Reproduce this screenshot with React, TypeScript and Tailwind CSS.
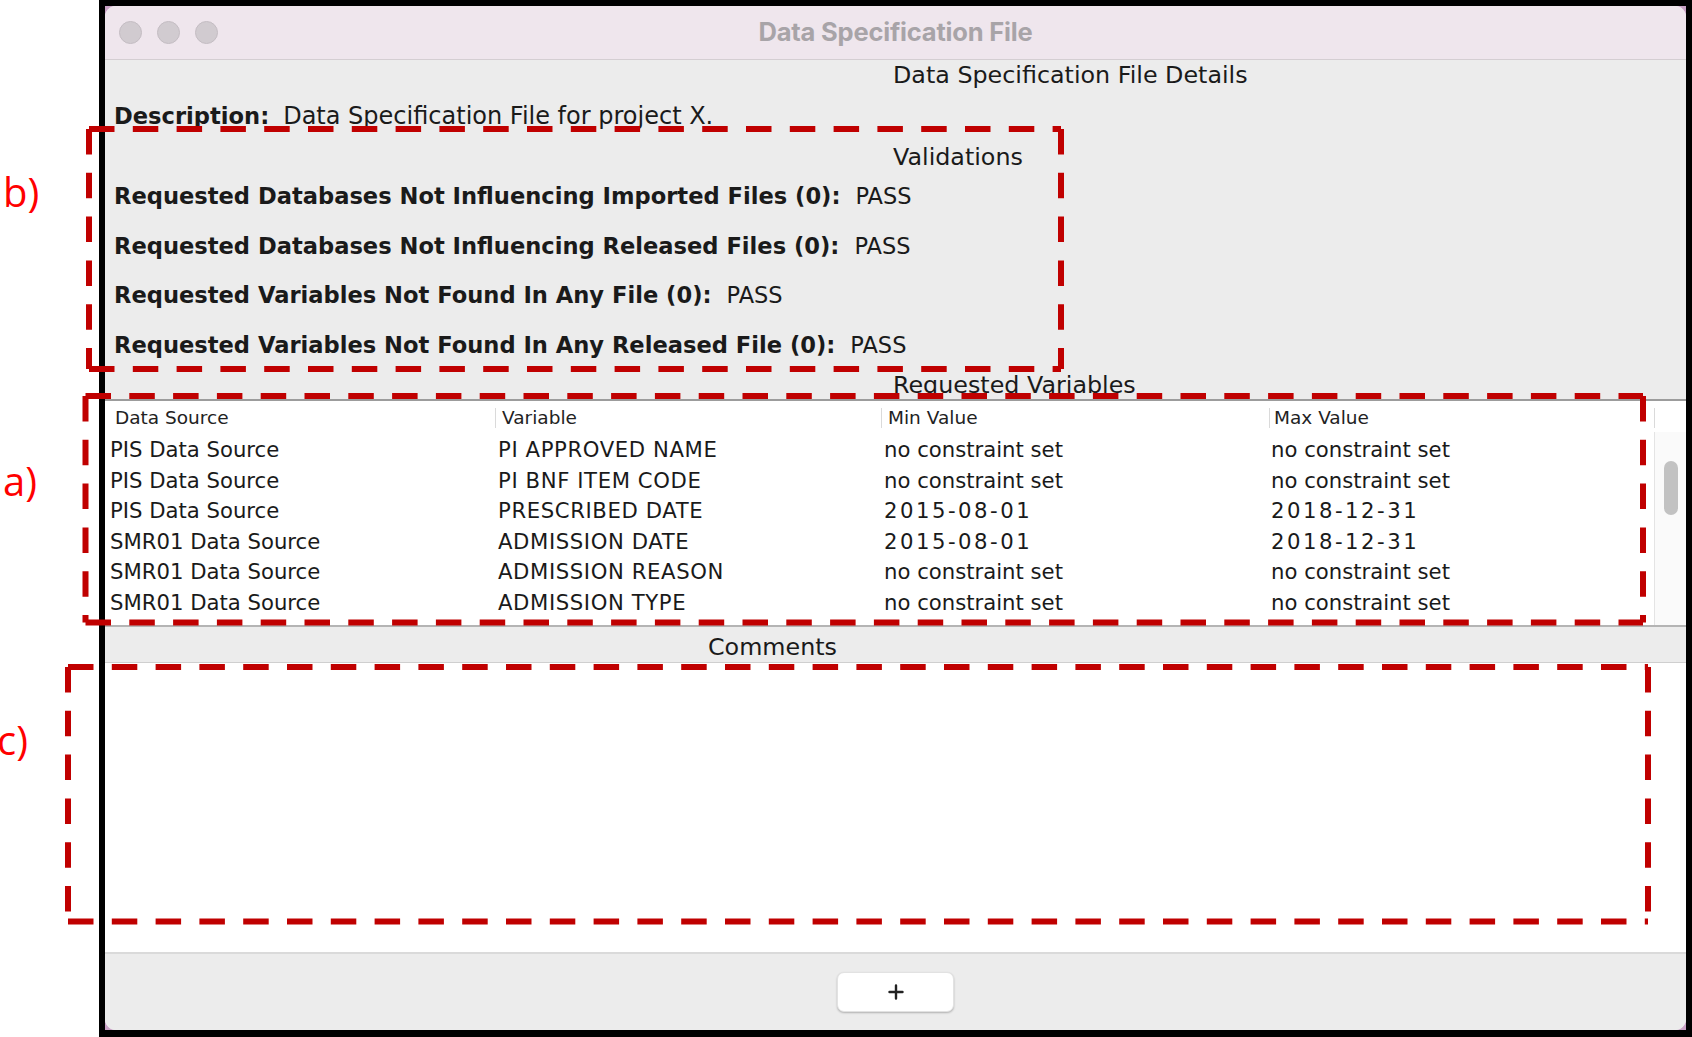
import React from 'react';

type Row = [string, string, string, string];

const validations = [
  'Requested Databases Not Influencing Imported Files (0):',
  'Requested Databases Not Influencing Released Files (0):',
  'Requested Variables Not Found In Any File (0):',
  'Requested Variables Not Found In Any Released File (0):',
];

const rows: Row[] = [
  ['PIS Data Source', 'PI APPROVED NAME', 'no constraint set', 'no constraint set'],
  ['PIS Data Source', 'PI BNF ITEM CODE', 'no constraint set', 'no constraint set'],
  ['PIS Data Source', 'PRESCRIBED DATE', '2015-08-01', '2018-12-31'],
  ['SMR01 Data Source', 'ADMISSION DATE', '2015-08-01', '2018-12-31'],
  ['SMR01 Data Source', 'ADMISSION REASON', 'no constraint set', 'no constraint set'],
  ['SMR01 Data Source', 'ADMISSION TYPE', 'no constraint set', 'no constraint set'],
  ['SMR01 Data Source', 'DATE OF MAIN OPERATION', 'no constraint set', 'no constraint set'],
];

const headers = ['Data Source', 'Variable', 'Min Value', 'Max Value'];

const isDate = (v: string) => /^\d{4}-\d{2}-\d{2}$/.test(v);

// dashed callout rectangle, each side drawn on its own so every corner starts with a dash
const DashBox: React.FC<{ x1: number; y1: number; x2: number; y2: number }> = ({ x1, y1, x2, y2 }) => {
  const common = {
    stroke: '#c00000',
    strokeWidth: 6,
    strokeDasharray: '25.5 18.3',
    fill: 'none',
  };
  return (
    <g>
      <line x1={x1} y1={y1} x2={x2} y2={y1} {...common} />
      <line x1={x2} y1={y1} x2={x2} y2={y2} {...common} />
      <line x1={x1} y1={y2} x2={x2} y2={y2} {...common} />
      <line x1={x1} y1={y1} x2={x1} y2={y2} {...common} />
    </g>
  );
};

const TitleBar: React.FC = () => (
  <div className="h-[54px] shrink-0 grid grid-cols-[1fr_auto_1fr] items-center bg-[#efe6ed] border-b border-[#d4ced2]">
    <div className="flex items-center gap-[15px] pl-[14px]">
      <span className="w-[23px] h-[23px] rounded-full bg-[#d1cbd0] border border-[#c4bdc3]" />
      <span className="w-[23px] h-[23px] rounded-full bg-[#d1cbd0] border border-[#c4bdc3]" />
      <span className="w-[23px] h-[23px] rounded-full bg-[#d1cbd0] border border-[#c4bdc3]" />
    </div>
    <div className="font-['Inter'] font-bold text-[25.5px] text-[#a8a4a8] tracking-[-0.2px]">Data Specification File</div>
    <div />
  </div>
);

const Details: React.FC = () => (
  <div className="h-[339px] shrink-0 flex flex-col pt-[1px] text-[#1a1a1a]">
    <div className="pl-[788px] text-[23.8px] leading-[28px]">Data Specification File Details</div>
    <div className="mt-[13px] pl-[9px] flex items-baseline leading-[28px]">
      <span className="font-bold text-[22.6px]">Description:</span>
      <span className="ml-[14px] text-[24px]">Data Specification File for project X.</span>
    </div>
    <div className="mt-[13px] pl-[788px] text-[23.8px] leading-[28px]">Validations</div>
    <div className="mt-[11px] pl-[9px] flex flex-col gap-[21.5px]">
      {validations.map((v) => (
        <div key={v} className="flex items-baseline leading-[28px]">
          <span className="font-bold text-[22.6px]">{v}</span>
          <span className="ml-[15px] text-[22.5px]">PASS</span>
        </div>
      ))}
    </div>
    <div className="mt-[12px] pl-[788px] text-[23.8px] leading-[28px]">Requested Variables</div>
  </div>
);

const colClass = 'grid grid-cols-[390px_386px_388px_385px]';

const VariablesTable: React.FC = () => (
  <div className="h-[228px] shrink-0 flex bg-white border-t-2 border-b-2 border-t-[#9c9c9c] border-b-[#b4b4b4] overflow-hidden">
    <div className="w-[1549px] shrink-0 flex flex-col">
      <div className={`${colClass} h-[33px] shrink-0 text-[18.5px] text-[#222]`}>
        {headers.map((h, i) => (
          <div key={h} className="relative flex items-center">
            {i > 0 && <span className="absolute left-0 top-[7px] h-[20px] w-px bg-[#dadada]" />}
            <span className={i === 0 ? 'pl-[10px]' : i === 3 ? 'pl-[5px]' : 'pl-[7px]'}>{h}</span>
          </div>
        ))}
      </div>
      {rows.map((r, ri) => (
        <div key={ri} className={`${colClass} h-[30.6px] shrink-0 items-center text-[21.2px] text-[#1a1a1a]`}>
          {r.map((c, ci) => (
            <div
              key={ci}
              className={`whitespace-nowrap ${ci === 0 ? 'pl-[5px]' : ci === 3 ? 'pl-[2px]' : 'pl-[3px]'} ${
                isDate(c) ? 'tracking-[2.5px]' : ci === 1 ? 'tracking-[0.6px]' : ''
              }`}
            >
              {c}
            </div>
          ))}
        </div>
      ))}
    </div>
    <div className="flex-1 flex flex-col">
      <div className="h-[31px] shrink-0 relative">
        <span className="absolute left-0 top-[7px] h-[20px] w-px bg-[#dadada]" />
      </div>
      <div className="flex-1 bg-[#fafafa] border-l border-[#e4e4e4] flex justify-center pt-[29px]">
        <div className="w-[14px] h-[54px] rounded-full bg-[#c2c2c2]" />
      </div>
    </div>
  </div>
);

const Comments: React.FC = () => (
  <>
    <div className="h-[36px] shrink-0 flex items-center pt-[6px] pl-[603px] text-[23.8px] text-[#1a1a1a] bg-[#ececec] border-b border-[#cfcfcf]">
      Comments
    </div>
    <div className="h-[289px] shrink-0 bg-white" />
    <div className="flex-1 flex items-center justify-center bg-[#ececec] border-t-2 border-[#dadada]">
      <button className="w-[117px] h-[40px] rounded-[7px] bg-white shadow-[0_1px_2px_rgba(0,0,0,0.25)] border border-[#e2e2e2] flex items-center justify-center">
        <svg width="16" height="16" viewBox="0 0 16 16">
          <path d="M8 1.5v13M1.5 8h13" stroke="#222" strokeWidth="2.4" strokeLinecap="round" />
        </svg>
      </button>
    </div>
  </>
);

const App: React.FC = () => {
  return (
    <div className="relative w-[1692px] h-[1037px] bg-white overflow-hidden flex font-['DejaVu_Sans',sans-serif]">
      <div className="w-[99px] shrink-0" />
      <div className="flex-1 border-[6px] border-b-[7px] border-black bg-[#c9a2c6]">
        <div className="h-full rounded-[11px] overflow-hidden flex flex-col bg-[#ececec]">
          <TitleBar />
          <Details />
          <VariablesTable />
          <Comments />
        </div>
      </div>

      {/* review callouts drawn over the window */}
      <svg className="absolute inset-0 pointer-events-none" width="1692" height="1037" viewBox="0 0 1692 1037">
        <DashBox x1={89} y1={129} x2={1061} y2={369} />
        <DashBox x1={85.5} y1={396} x2={1643} y2={622.5} />
        <DashBox x1={68} y1={667} x2={1648} y2={921.5} />
      </svg>
      <div className="absolute left-[3px] top-[172px] font-['Open_Sans',sans-serif] text-[40px] leading-[40px] text-[#ff0000]">b)</div>
      <div className="absolute left-[3px] top-[461px] font-['Open_Sans',sans-serif] text-[40px] leading-[40px] text-[#ff0000]">a)</div>
      <div className="absolute left-[-3px] top-[720px] font-['Open_Sans',sans-serif] text-[40px] leading-[40px] text-[#ff0000]">c)</div>
    </div>
  );
};

export default App;
